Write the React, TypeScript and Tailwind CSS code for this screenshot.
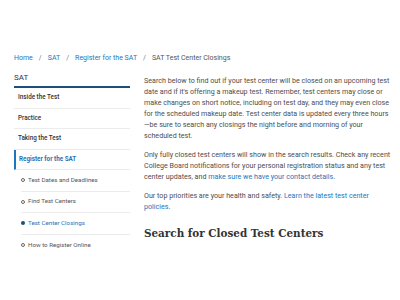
import React from "react";

const topItems = ["Inside the Test", "Practice", "Taking the Test"];

const subItems = [
  { label: "Test Dates and Deadlines", active: false },
  { label: "Find Test Centers", active: false },
  { label: "Test Center Closings", active: true },
  { label: "How to Register Online", active: false },
];

const App = () => {
  return (
    <div className="w-[400px] h-[300px] bg-white overflow-hidden font-['Roboto',sans-serif] text-[#4d4d4d]">
      <div className="pl-[14px] pt-[53px] flex items-center gap-[6px] text-[7px] leading-[10px]">
        <span className="text-[#1f75b9]">Home</span>
        <span className="text-[#777]">/</span>
        <span className="text-[#1f75b9]">SAT</span>
        <span className="text-[#777]">/</span>
        <span className="text-[#1f75b9]">Register for the SAT</span>
        <span className="text-[#777]">/</span>
        <span className="text-[#555]">SAT Test Center Closings</span>
      </div>

      <div className="flex pl-[14px] pt-[10px] gap-[14px]">
        <aside className="w-[116px] shrink-0">
          <div className="text-[8px] leading-[10px] text-[#333] pb-[3px] border-b-2 border-[#1c4f7c]">
            SAT
          </div>
          {topItems.map((t) => (
            <div
              key={t}
              className="h-[20.5px] flex items-center pl-[4px] border-b border-[#ececec] text-[6.3px] font-medium text-[#333]"
            >
              {t}
            </div>
          ))}
          <div className="h-[20.5px] flex items-center pl-[3px] border-l-2 border-[#1f75b9] border-b border-b-[#ececec] text-[6.3px] font-bold text-[#1f75b9]">
            Register for the SAT
          </div>
          {subItems.map((s, i) => (
            <div key={s.label} className="pl-[7px]">
              <div
                className={
                  "h-[21.5px] flex items-center gap-[3px] text-[6.2px] " +
                  (i < subItems.length - 1 ? "border-b border-[#ececec] " : "") +
                  (s.active ? "text-[#1f75b9]" : "text-[#555]")
                }
              >
                {s.active ? (
                  <span className="w-[4px] h-[4px] rounded-full bg-[#1c4f7c]" />
                ) : (
                  <span className="w-[4px] h-[4px] rounded-full border border-[#666]" />
                )}
                {s.label}
              </div>
            </div>
          ))}
        </aside>

        <main className="w-[250px] whitespace-nowrap text-[7.15px] leading-[11px] text-[#4d4d4d]">
          <p className="mt-[2px]">
            Search below to find out if your test center will be closed on an upcoming test
            <br />
            date and if it's offering a makeup test. Remember, test centers may close or
            <br />
            make changes on short notice, including on test day, and they may even close
            <br />
            for the scheduled makeup date. Test center data is updated every three hours
            <br />
            —be sure to search any closings the night before and morning of your
            <br />
            scheduled test.
          </p>
          <p className="mt-[8px]">
            Only fully closed test centers will show in the search results. Check any recent
            <br />
            College Board notifications for your personal registration status and any test
            <br />
            center updates, and{" "}
            <span className="text-[#1f75b9]">make sure we have your contact details</span>.
          </p>
          <p className="mt-[8px]">
            Our top priorities are your health and safety.{" "}
            <span className="text-[#1f75b9]">
              Learn the latest test center
              <br />
              policies
            </span>
            .
          </p>
          <h2 className="mt-[14px] text-[10.4px] leading-[14px] font-bold text-[#333] font-['DejaVu_Serif',serif]">
            Search for Closed Test Centers
          </h2>
        </main>
      </div>
    </div>
  );
};

export default App;
